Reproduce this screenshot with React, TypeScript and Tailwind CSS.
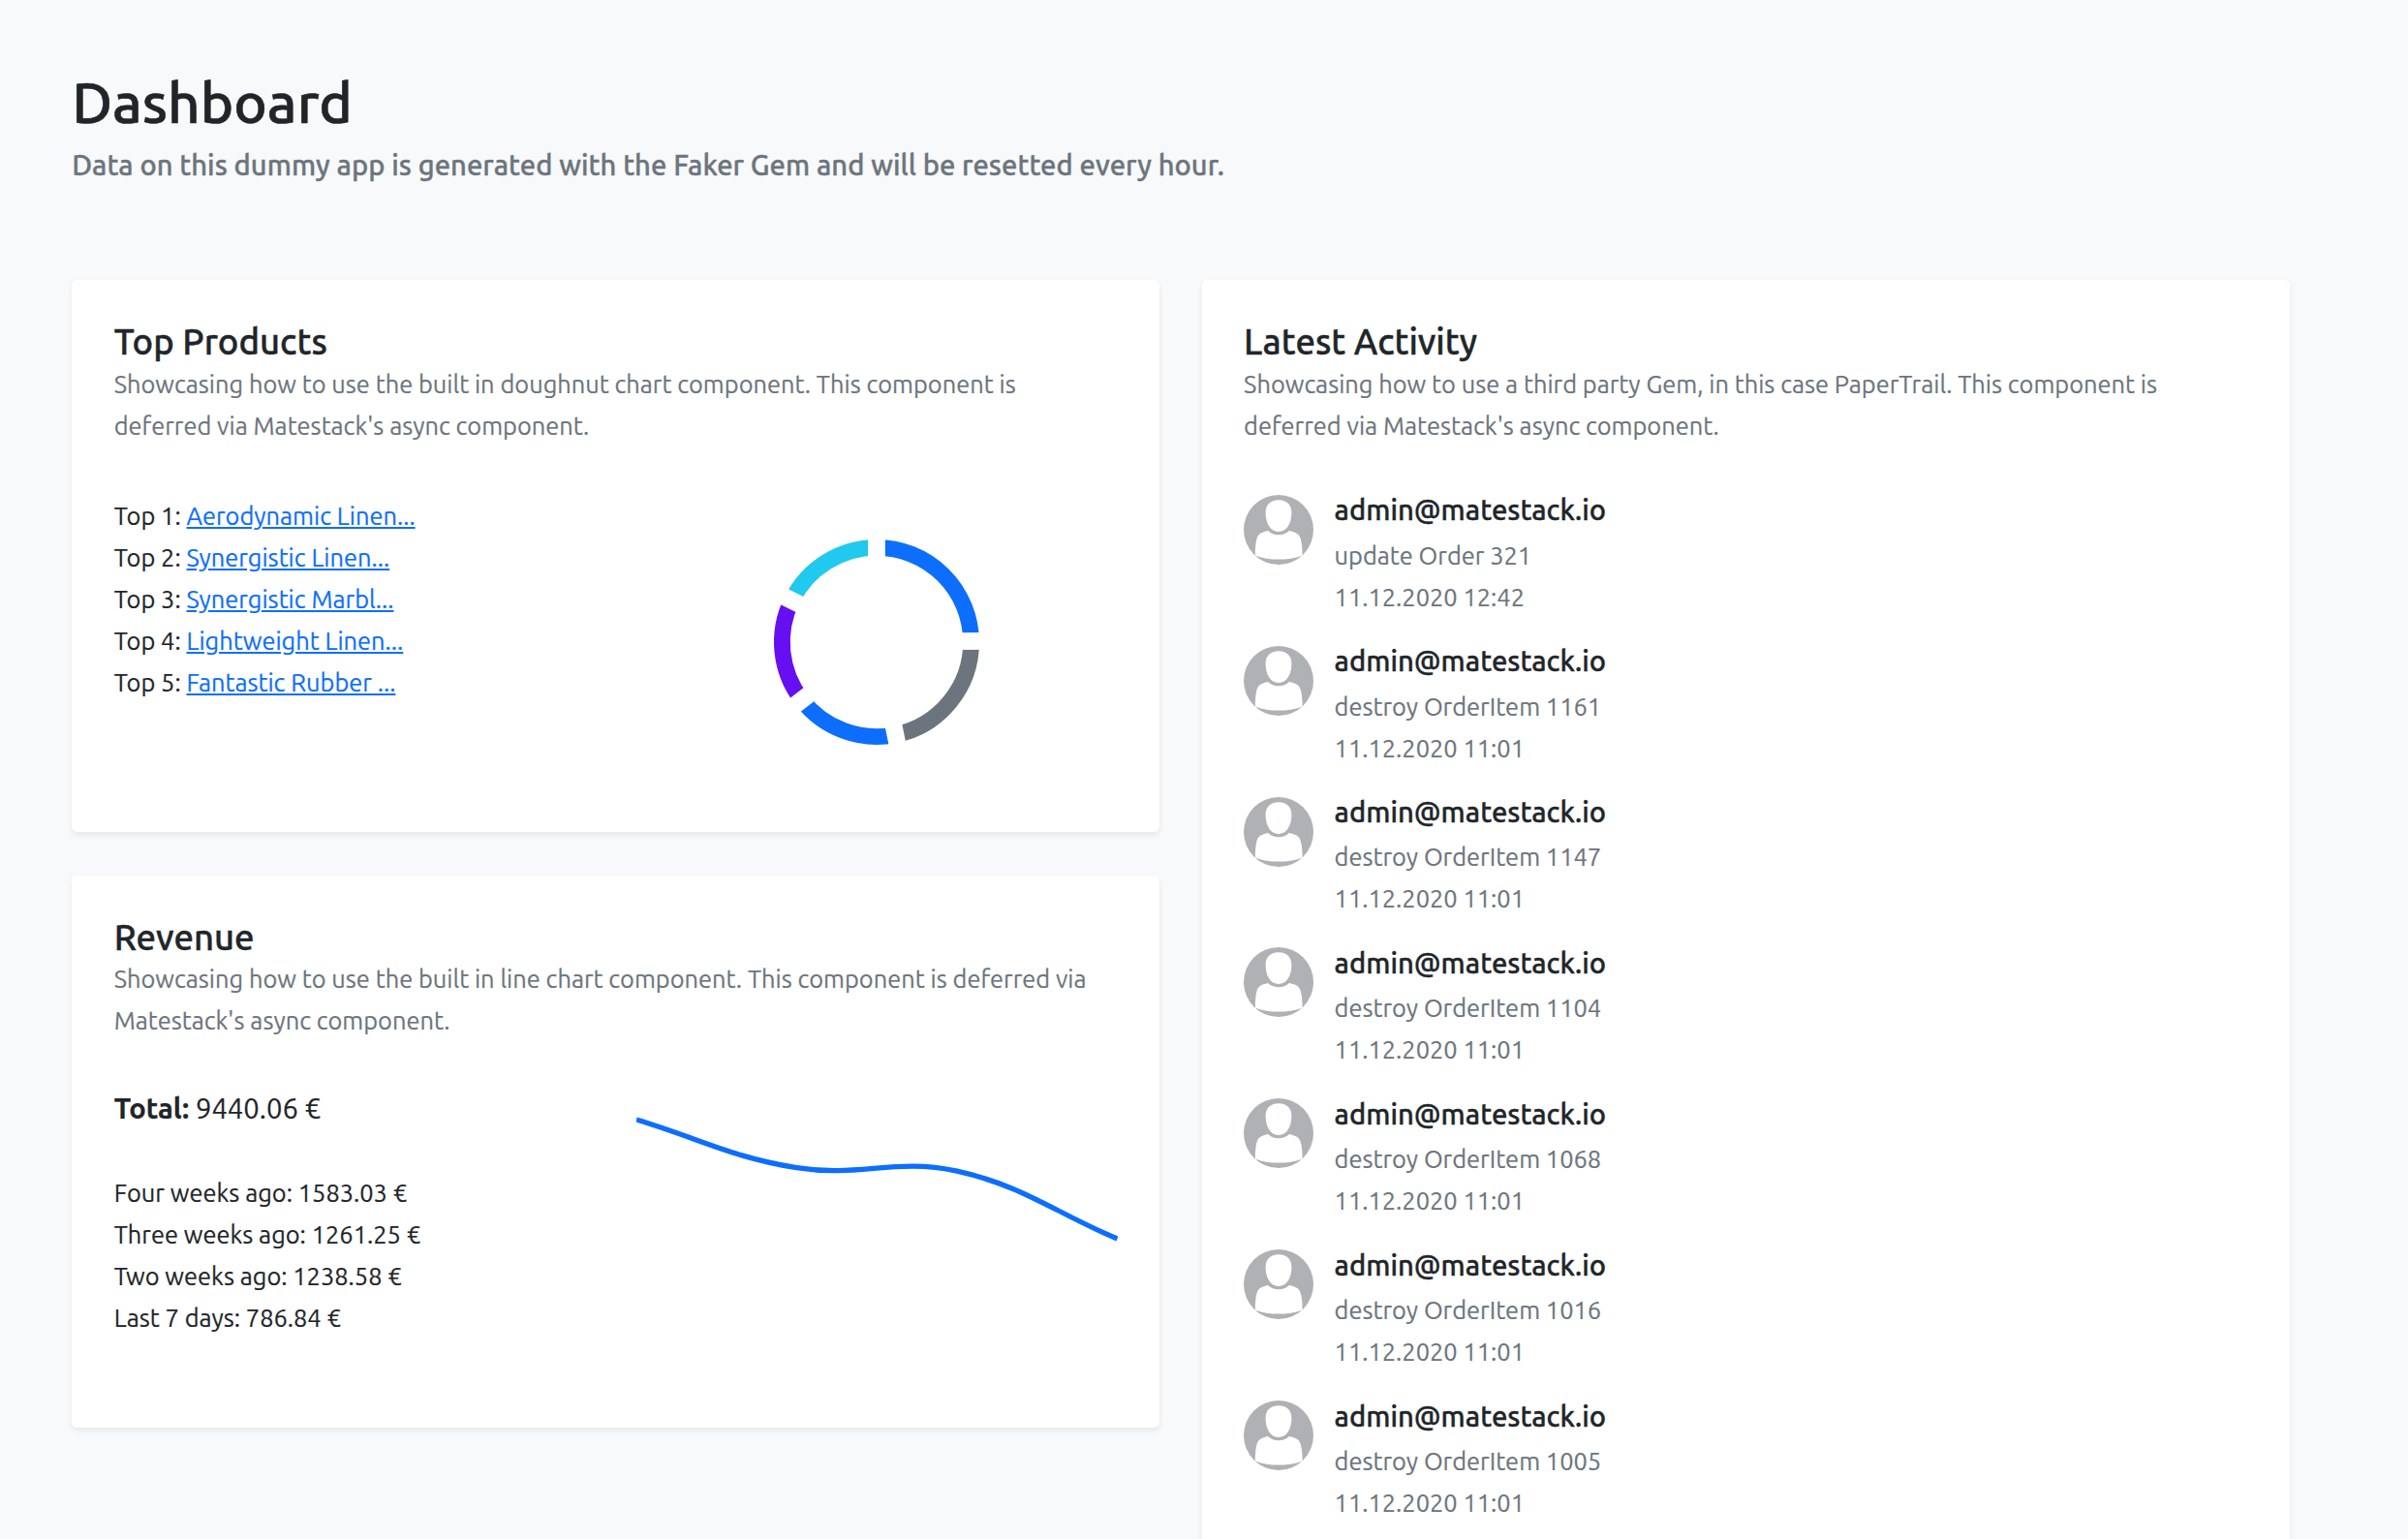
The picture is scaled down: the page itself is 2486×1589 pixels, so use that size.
import React from 'react';

const products = [
  'Aerodynamic Linen...',
  'Synergistic Linen...',
  'Synergistic Marbl...',
  'Lightweight Linen...',
  'Fantastic Rubber ...',
];

const revenue = [
  'Four weeks ago: 1583.03 €',
  'Three weeks ago: 1261.25 €',
  'Two weeks ago: 1238.58 €',
  'Last 7 days: 786.84 €',
];

const activities = [
  { action: 'update Order 321', date: '11.12.2020 12:42' },
  { action: 'destroy OrderItem 1161', date: '11.12.2020 11:01' },
  { action: 'destroy OrderItem 1147', date: '11.12.2020 11:01' },
  { action: 'destroy OrderItem 1104', date: '11.12.2020 11:01' },
  { action: 'destroy OrderItem 1068', date: '11.12.2020 11:01' },
  { action: 'destroy OrderItem 1016', date: '11.12.2020 11:01' },
  { action: 'destroy OrderItem 1005', date: '11.12.2020 11:01' },
];

// Clockwise start and end of every segment, in degrees from the top.
const segments = [
  { from: 0, to: 89.4, color: '#0d6efd' },
  { from: 89.4, to: 168.5, color: '#6c757d' },
  { from: 168.5, to: 232.3, color: '#0d6efd' },
  { from: 232.3, to: 296.2, color: '#6610f2' },
  { from: 296.2, to: 360, color: '#20c9ee' },
];

function polar(r: number, deg: number) {
  const a = (deg * Math.PI) / 180;
  return `${(r * Math.sin(a)).toFixed(2)} ${(-r * Math.cos(a)).toFixed(2)}`;
}

function Doughnut() {
  return (
    <svg className="size-[240px]" viewBox="-120 -120 240 240" fill="none">
      {segments.map((s) => (
        <path
          key={s.from}
          d={`M${polar(97.6, s.from)} A97.6 97.6 0 0 1 ${polar(97.6, s.to)}`}
          stroke={s.color}
          strokeWidth="16.8"
        />
      ))}
      {segments.map((s) => (
        <path key={s.from} d={`M${polar(80, s.from)} L${polar(115, s.from)}`} stroke="#fff" strokeWidth="17.8" />
      ))}
    </svg>
  );
}

function LineChart() {
  return (
    <svg className="h-[180px] w-[497px]" viewBox="0 0 497 180" fill="none">
      <path
        d="M0 31 C66.2 50.9 97.9 69.8 165.5 80.7 C230.3 91.1 267.5 70.1 331 84.2 C399.9 99.5 430.3 126.1 496.5 154"
        stroke="#0d6efd"
        strokeWidth="5.3"
      />
    </svg>
  );
}

function Avatar() {
  return (
    <svg className="size-[72px] shrink-0" viewBox="0 0 72 72">
      <circle cx="36" cy="36" r="36" fill="#b0b1b5" />
      <path
        d="M36 5.2 C45 5.2 49.6 10.5 49.4 19 C49.2 29 44.5 38 36 38 C27.5 38 22.8 29 22.6 19 C22.4 10.5 27 5.2 36 5.2 Z"
        fill="#fff"
      />
      <path
        d="M25.2 37 C27.5 39.6 31 41.2 36 41.2 C41 41.2 44.5 39.6 46.8 37 C54 38.6 57.2 39.8 58.8 45.5 C60.2 50.5 60.6 56 60.6 62.4 C52.5 65.4 44.5 66.6 36 66.6 C27.5 66.6 19.5 65.4 11.8 62.4 C11.8 56 12.2 50.5 13.4 45.5 C15 39.8 18.3 38.6 25.2 37 Z"
        fill="#fff"
      />
    </svg>
  );
}

function Card({
  title,
  text,
  className,
  children,
}: {
  title: string;
  text: string;
  className: string;
  children: React.ReactNode;
}) {
  return (
    <section
      className={`rounded-[6px] bg-white px-[43.5px] pt-[42.3px] shadow-[0_3px_6px_rgba(0,0,0,0.075)] ${className}`}
    >
      <h2 className="text-[36.5px] leading-[43.5px] font-medium [-webkit-text-stroke:0.4px]">{title}</h2>
      <p className="mb-[50px] text-[#6c757d]">{text}</p>
      {children}
    </section>
  );
}

export default function App() {
  return (
    <main className="h-[1589px] overflow-hidden bg-[#f8f9fb] px-[74.2px] pt-[71px] font-['Ubuntu','Noto_Sans',sans-serif] text-[25.4px] leading-[43px] text-[#212529] [-webkit-text-stroke:0.2px]">
      <header className="mb-[101.5px]">
        <h1 className="text-[58.4px] leading-[70px] font-medium [-webkit-text-stroke:0.6px]">Dashboard</h1>
        <p className="mt-[11.5px] text-[29.2px] leading-[35px] font-medium text-[#6c757d] [-webkit-text-stroke:0.35px]">
          Data on this dummy app is generated with the Faker Gem and will be resetted every hour.
        </p>
      </header>
      <div className="flex items-start gap-[43.4px]">
        <div className="flex w-[1123px] flex-col gap-[44.6px]">
          <Card
            title="Top Products"
            text="Showcasing how to use the built in doughnut chart component. This component is deferred via Matestack's async component."
            className="h-[570px]"
          >
            <div className="flex">
              <ul className="w-1/2">
                {products.map((name, i) => (
                  <li key={name}>
                    Top {i + 1}:{' '}
                    <a href="#" className="text-[#0d6efd] underline">
                      {name}
                    </a>
                  </li>
                ))}
              </ul>
              <div className="flex w-1/2 justify-center pt-[32px] pl-[21px]">
                <Doughnut />
              </div>
            </div>
          </Card>
          <Card
            title="Revenue"
            text="Showcasing how to use the built in line chart component. This component is deferred via Matestack's async component."
            className="h-[570px]"
          >
            <div className="flex justify-between">
              <div>
                <p className="mb-[46px] text-[29.2px] leading-[39px]">
                  <b className="font-bold">Total:</b> 9440.06 €
                </p>
                <ul>
                  {revenue.map((line) => (
                    <li key={line}>{line}</li>
                  ))}
                </ul>
              </div>
              <LineChart />
            </div>
          </Card>
        </div>
        <Card
          title="Latest Activity"
          text="Showcasing how to use a third party Gem, in this case PaperTrail. This component is deferred via Matestack's async component."
          className="h-[1400px] w-[1123px]"
        >
          <ul>
            {activities.map((a) => (
              <li key={a.action} className="flex h-[155.9px] gap-[21.5px]">
                <Avatar />
                <div>
                  <h3 className="mt-[0.5px] mb-[8.8px] text-[29.2px] leading-[31.6px] font-medium [-webkit-text-stroke:0.35px]">
                    admin@matestack.io
                  </h3>
                  <p className="text-[#6c757d]">{a.action}</p>
                  <p className="text-[#6c757d]">{a.date}</p>
                </div>
              </li>
            ))}
          </ul>
        </Card>
      </div>
    </main>
  );
}
